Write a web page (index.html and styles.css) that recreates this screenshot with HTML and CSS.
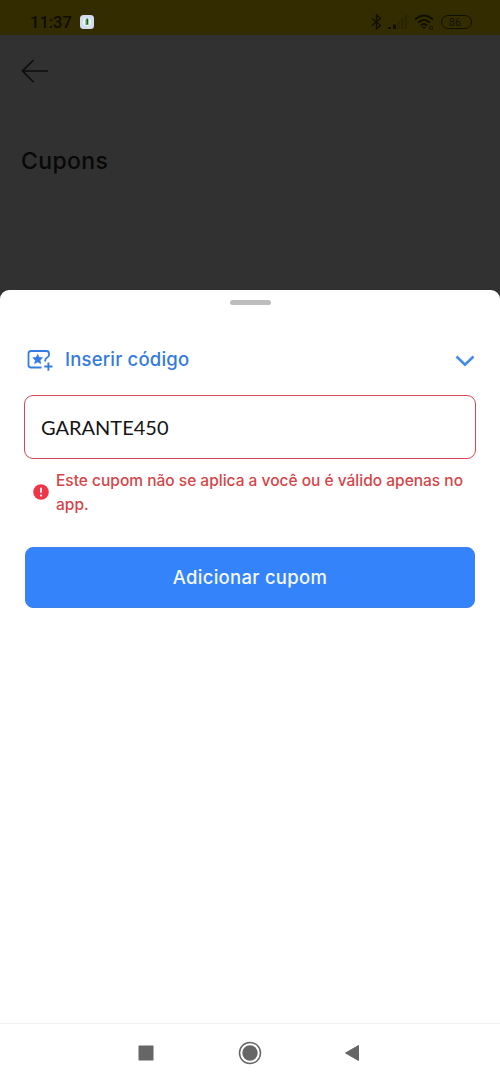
FILE: index.html
```html
<!DOCTYPE html>
<html lang="pt-BR">
<head>
<meta charset="utf-8">
<title>Cupons</title>
<link rel="stylesheet" href="styles.css">
</head>
<body>
<div class="screen">
  <header class="status">
    <span class="clock">11:37</span>
    <svg class="notice" width="14" height="14" viewBox="0 0 14 14"><rect width="14" height="14" rx="3.5" fill="#d4dcef"/><circle cx="7" cy="7" r="4" fill="#eef4f5"/><path d="M5.500 4.800L7 3l1.500 1v6h-3z" fill="#48a052"/><path d="M7.500 4v5" stroke="#225e2c"/></svg>
    <div class="signals">
      <svg width="12" height="16" viewBox="0 0 12 16"><path d="M1 4.500l8.500 7L5.500 15V1l4 3.500-8.500 7" class="line"/></svg>
      <svg class="bars" width="20" height="14" viewBox="0 0 20 14"><path d="M0 12h3v2H0zM5 9.500h3V14H5z" fill="#111000"/><path d="M9.500 6h2v8h-2zM13.400 3h2v11h-2zM17 0h2v14h-2z" fill="#292400"/></svg>
      <svg class="wifi" width="20" height="16" viewBox="0 0 20 16"><path d="M1 5.500q9-8 18 0M4 8.700q6-5.400 12 0M6.700 11.500q3.300-2.900 6.600 0" class="wave"/><path d="M7.700 12.700h4.600L10 15z" fill="#111000"/><path d="M15.500 12.500h3v2.500h-3z" stroke="#111000" fill="none" stroke-width=".8"/></svg>
      <span class="battery">86</span>
    </div>
  </header>
  <section class="backdrop">
    <svg class="back" width="28" height="24" viewBox="0 0 28 24"><path d="M12.500 1L1.500 12l11 11M1.500 12H27" fill="none" stroke="#0d0d0d" stroke-width="1.700"/></svg>
    <h1 class="title">Cupons</h1>
  </section>
  <main class="sheet">
    <div class="handle"></div>
    <div class="section-head">
      <svg class="coupon" width="26" height="22" viewBox="0 0 26 22"><path d="M14.500 17.500H4Q1.500 17.500 1.500 15V3.500Q1.500 1 4 1h15.500Q22 1 22 3.500V5q0 1.500-1.800 2.500-2 1.200-2 3v1" fill="none" stroke="#347de0" stroke-width="1.800"/><path d="M10.700 4.200l1.500 3.150 3.500.45-2.550 2.400.65 3.450-3.100-1.650-3.100 1.650.65-3.450L5.700 7.800l3.500-.45z" fill="#347de0" stroke="#347de0" stroke-width=".5"/><path d="M17.300 16.500h8.200M21.400 12.400v8.300" stroke="#347de0" stroke-width="1.900"/></svg>
      <h2 class="heading">Inserir código</h2>
      <svg class="chevron" width="20" height="12" viewBox="0 0 20 12"><path d="M1.500 1.500L10 9.800l8.500-8.300" fill="none" stroke="#438be8" stroke-width="2.600"/></svg>
    </div>
    <div class="field"><span class="value">GARANTE450</span></div>
    <div class="error">
      <svg class="alert" width="16" height="16" viewBox="0 0 16 16"><circle cx="8" cy="8" r="7.800" fill="#ef3547"/><path d="M8 3.700v5" stroke="#fff" stroke-width="1.800"/><circle cx="8" cy="11.500" r="1.100" fill="#fff"/></svg>
      <p class="message">Este cupom não se aplica a você ou é válido apenas no<br>app.</p>
    </div>
    <button class="submit">Adicionar cupom</button>
  </main>
  <nav class="nav">
    <svg width="16" height="16" viewBox="0 0 16 16"><rect x=".5" y=".5" width="15" height="15" rx=".5" fill="#666"/></svg>
    <svg class="home" width="24" height="24" viewBox="0 0 24 24"><circle cx="12" cy="12" r="10.500" fill="none" stroke="#666" stroke-width="1.500"/><circle cx="12" cy="12" r="7.700" fill="#666"/></svg>
    <svg width="16" height="18" viewBox="0 0 16 18"><path d="M1.500 9L14.500 1.500v15z" fill="#666" stroke="#666" stroke-linejoin="round"/></svg>
  </nav>
</div>
</body>
</html>
```
FILE: styles.css
```css
* { box-sizing: border-box; }
body { margin: 0; background: #313131; font-family: Inter, "Noto Sans", sans-serif; }
svg { display: block; flex: none; }
h1, h2, p { margin: 0; font-weight: 500; white-space: nowrap; }
.screen { display: flex; flex-direction: column; width: 500px; height: 1083px; overflow: hidden; }
.status { display: flex; align-items: center; height: 35px; padding: 9px 28px 0 30px; background: #332c00; font-family: Roboto, sans-serif; }
.clock { width: 50px; padding-top: 1px; font-size: 16.5px; font-weight: 500; line-height: 24px; color: #0e0c00; }
.signals { display: flex; align-items: center; margin-left: auto; }
.line { fill: none; stroke: #111000; stroke-width: 1.4; }
.bars { margin-left: 5px; }
.wifi { margin-left: 6px; }
.wave { fill: none; stroke: #111000; stroke-width: 2; }
.battery { width: 31px; height: 14px; margin-left: 7px; padding-right: 3px; border: 1.5px solid #111000; border-radius: 7px; font-size: 10.5px; line-height: 13px; text-align: center; color: #111000; }
.backdrop { height: 255px; padding: 24px 21px; background: #313131; }
.back { margin-left: 0; }
.title { margin-top: 62px; font-size: 23px; line-height: 32px; letter-spacing: 0.35px; color: #080808; }
.sheet { display: flex; flex-direction: column; height: 733px; padding: 10px 24px 0; border-radius: 9px 9px 0 0; background: #fff; }
.handle { align-self: center; width: 41px; height: 5px; border-radius: 3px; background: #bdbdbd; }
.section-head { display: flex; align-items: center; height: 28px; margin-top: 40px; padding: 0 1px 0 3px; }
.coupon { margin-top: 4px; }
.heading { margin-left: 12px; font-size: 18.5px; line-height: 28px; letter-spacing: 0.18px; color: #347bdc; }
.chevron { margin: 3px 0 0 auto; }
.field { display: flex; align-items: center; height: 64px; margin-top: 22px; padding: 0 16px; border: 1.5px solid #d64755; border-radius: 9px; }
.value { font-family: Lato, sans-serif; font-size: 20px; color: #151515; }
.error { display: flex; align-items: center; height: 48px; margin-top: 9px; padding-left: 9px; }
.message { padding-top: 1px; margin-left: 7px; font-size: 15.5px; line-height: 24px; letter-spacing: 0; color: #d44549; }
.submit { height: 61px; margin: 31px 1px 0; padding: 0 0 1px; border: 1px solid #3f82e9; border-radius: 8px; background: #3483fa; font-family: inherit; font-size: 18.5px; font-weight: 500; line-height: 28px; letter-spacing: 0.28px; color: #f3f8ff; }
.nav { display: flex; align-items: center; justify-content: space-between; height: 60px; padding: 0 140px 2px 138px; border-top: 1px solid #efefef; background: #fff; }
.home { margin-left: 2px; }
```
